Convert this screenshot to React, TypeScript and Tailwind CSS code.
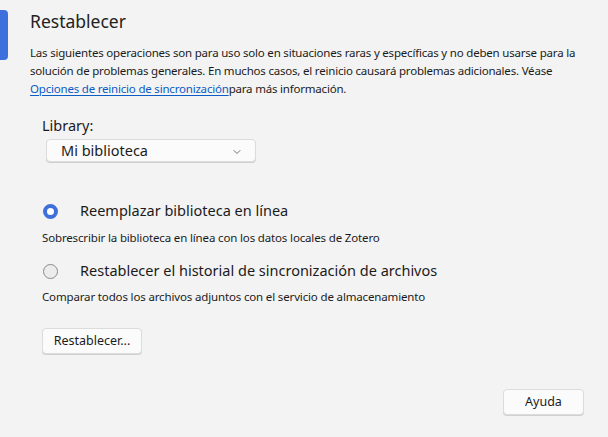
import { ChevronDown } from "lucide-react";

const font = { fontFamily: '"Noto Sans", "Open Sans", sans-serif' };

const Radio = ({ checked }: { checked?: boolean }) =>
  checked ? (
    <span className="w-[15px] h-[15px] rounded-full border-[4px] border-[#3f6fdc] bg-white shrink-0" />
  ) : (
    <span className="w-[15px] h-[15px] rounded-full border border-[#8a8a8a] bg-[#ececec] shrink-0" />
  );

export default function App() {
  return (
    <div className="w-[608px] h-[437px] bg-[#f3f3f3] text-[#1b1b1b] flex overflow-hidden" style={font}>
      <div className="pt-[10px]">
        <div className="w-[8px] h-[50px] bg-[#3d6fdd] rounded-r-[4px]" />
      </div>

      <div className="flex-1 flex flex-col pl-[22px] pr-[24px]">
        <h1 className="text-[17.5px] leading-[24px] mt-[9px] text-[#222]">Restablecer</h1>

        <p className="text-[11.5px] leading-[18px] mt-[11px] whitespace-nowrap tracking-[-0.2px]">
          Las siguientes operaciones son para uso solo en situaciones raras y específicas y no deben usarse para la
          <br />
          solución de problemas generales. En muchos casos, el reinicio causará problemas adicionales. Véase
          <br />
          <a className="text-[#0b5cc5] underline underline-offset-2">Opciones de reinicio de sincronización</a>
          para más información.
        </p>

        <div className="pl-[12px] mt-[17px]">
          <div className="text-[14.5px] leading-[20px]">Library:</div>
          <div className="ml-[4px] mt-[4px] w-[210px] h-[23px] bg-[#fbfbfb] border border-[#dcdcdc] rounded-[4px] flex items-center pl-[14px] pr-[12px] shadow-[0_1px_0_#d0d0d0]">
            <span className="text-[14.5px] flex-1">Mi biblioteca</span>
            <ChevronDown size={12} strokeWidth={1.5} className="text-[#444] mt-[3px]" />
          </div>
        </div>

        <div className="pl-[12px] mt-[39px] flex flex-col">
          <div className="flex items-center h-[20px]">
            <span className="w-[38px] pl-[1px] flex"><Radio checked /></span>
            <span className="text-[14.5px]">Reemplazar biblioteca en línea</span>
          </div>
          <div className="text-[11.5px] leading-[16px] mt-[9px] tracking-[-0.15px]">
            Sobrescribir la biblioteca en línea con los datos locales de Zotero
          </div>

          <div className="flex items-center h-[20px] mt-[15px]">
            <span className="w-[38px] pl-[1px] flex"><Radio /></span>
            <span className="text-[14.5px]">Restablecer el historial de sincronización de archivos</span>
          </div>
          <div className="text-[11.5px] leading-[16px] mt-[8px] tracking-[-0.15px]">
            Comparar todos los archivos adjuntos con el servicio de almacenamiento
          </div>

          <div className="mt-[22px]">
            <button className="w-[100px] h-[26px] bg-[#fbfbfb] border border-[#dcdcdc] rounded-[4px] text-[12.5px] shadow-[0_1px_0_#d0d0d0]">
              Restablecer...
            </button>
          </div>
        </div>

        <div className="mt-auto mb-[22px] flex justify-end">
          <button className="w-[81px] h-[26px] bg-[#fbfbfb] border border-[#dcdcdc] rounded-[4px] text-[12.5px] shadow-[0_1px_0_#d0d0d0]">
            Ayuda
          </button>
        </div>
      </div>
    </div>
  );
}
